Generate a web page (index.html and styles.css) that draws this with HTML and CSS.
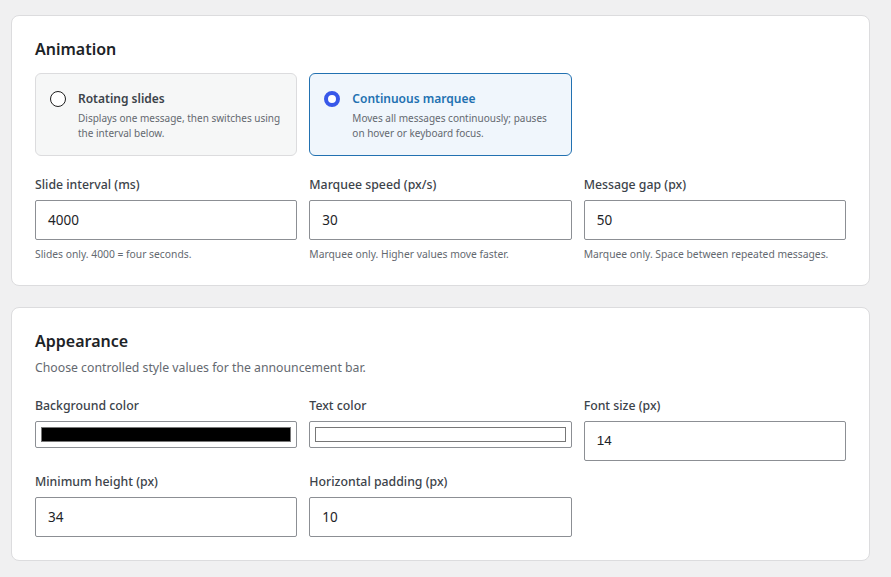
FILE: index.html
```html
<!DOCTYPE html>
<html lang="en">
<head>
    <meta charset="UTF-8">
    <title>Announcement bar settings</title>
    <link rel="stylesheet" href="styles.css">
</head>
<body>
    <div class="wrap">
        <section class="panel">
            <h2 class="panel_title">Animation</h2>
            <div class="grid">
                <label class="choice">
                    <span class="radio"></span>
                    <span class="choice_body">
                        <strong>Rotating slides</strong>
                        <em>Displays one message, then switches using the interval below.</em>
                    </span>
                </label>
                <label class="choice choice_on">
                    <span class="radio"></span>
                    <span class="choice_body">
                        <strong>Continuous marquee</strong>
                        <em>Moves all messages continuously; pauses on hover or keyboard focus.</em>
                    </span>
                </label>
            </div>
            <div class="grid fields">
                <div class="field">
                    <label>Slide interval (ms)</label>
                    <div class="input">4000</div>
                    <p class="help">Slides only. 4000 = four seconds.</p>
                </div>
                <div class="field">
                    <label>Marquee speed (px/s)</label>
                    <div class="input">30</div>
                    <p class="help">Marquee only. Higher values move faster.</p>
                </div>
                <div class="field">
                    <label>Message gap (px)</label>
                    <div class="input">50</div>
                    <p class="help">Marquee only. Space between repeated messages.</p>
                </div>
            </div>
        </section>

        <section class="panel">
            <h2 class="panel_title">Appearance</h2>
            <p class="panel_desc">Choose controlled style values for the announcement bar.</p>
            <div class="grid fields rows">
                <div class="field">
                    <label>Background color</label>
                    <div class="color"><span class="swatch swatch_black"></span></div>
                </div>
                <div class="field">
                    <label>Text color</label>
                    <div class="color"><span class="swatch swatch_white"></span></div>
                </div>
                <div class="field">
                    <label>Font size (px)</label>
                    <div class="input input_arial">14</div>
                </div>
                <div class="field">
                    <label>Minimum height (px)</label>
                    <div class="input">34</div>
                </div>
                <div class="field">
                    <label>Horizontal padding (px)</label>
                    <div class="input">10</div>
                </div>
            </div>
        </section>
    </div>
</body>
</html>
```

FILE: styles.css
```css
*{
    margin: 0;
    padding: 0;
    box-sizing: border-box;
}
body{
    background: #f0f0f1;
    font-family: "Noto Sans", "Open Sans", sans-serif;
    color: #1d2327;
}
.wrap{
    padding: 15px 21px 0 11px;
}
.panel{
    background: #fff;
    border: 1px solid #dcdcde;
    border-radius: 8px;
    padding: 21px 23px 23px 23px;
    margin-bottom: 21px;
}
.panel_title{
    font-size: 16px;
    font-weight: 600;
    line-height: 24px;
    color: #1d2327;
}
.panel_desc{
    font-size: 12.25px;
    line-height: 18px;
    color: #646970;
    margin-top: 6px;
}
.grid{
    display: grid;
    grid-template-columns: repeat(3, 1fr);
    column-gap: 12px;
    margin-top: 12px;
}
.fields{
    margin-top: 20px;
}
.rows{
    row-gap: 12px;
    align-items: start;
}
.choice{
    display: flex;
    gap: 12px;
    height: 83px;
    padding: 16px 14px 0 14px;
    background: #f6f7f7;
    border: 1px solid #dcdcde;
    border-radius: 6px;
}
.choice_on{
    background: #f0f6fc;
    border-color: #2271b1;
}
.radio{
    flex: none;
    width: 16px;
    height: 16px;
    margin-top: 1px;
    border: 1.5px solid #1e1e1e;
    border-radius: 50%;
    background: #fff;
}
.choice_on .radio{
    border: 4.5px solid #3858e9;
}
.choice_body strong{
    display: block;
    font-size: 12px;
    font-weight: 600;
    line-height: 18px;
    color: #3c434a;
}
.choice_on .choice_body strong{
    color: #2271b1;
}
.choice_body em{
    display: block;
    font-style: normal;
    font-size: 10px;
    line-height: 15px;
    color: #646970;
    margin-top: 3px;
}
.field label{
    display: block;
    font-size: 12.3px;
    font-weight: 500;
    line-height: 18px;
    color: #3c434a;
    margin-bottom: 6px;
}
.input{
    height: 40px;
    border: 1px solid #8c8f94;
    border-radius: 2px;
    padding: 0 12px;
    font-size: 13.5px;
    line-height: 38px;
    color: #1d2327;
    background: #fff;
}
.input_arial{
    font-family: "Liberation Sans", Arial, sans-serif;
}
.help{
    font-size: 10.3px;
    line-height: 16px;
    color: #646970;
    margin-top: 6px;
}
.color{
    height: 27px;
    border: 1px solid #8c8f94;
    border-radius: 2px;
    padding: 5px;
    background: #fff;
}
.swatch{
    display: block;
    height: 15px;
    border: 1px solid #777;
}
.swatch_black{
    background: #000;
}
.swatch_white{
    background: #fff;
}
```
